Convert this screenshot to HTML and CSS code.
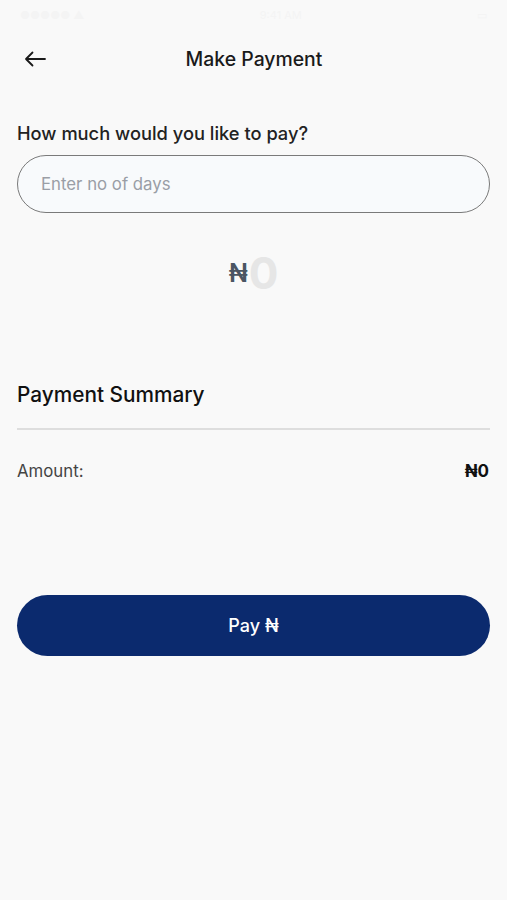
FILE: index.html
```html
<!DOCTYPE html>
<html>
<head>
	<meta charset="utf-8">
	<title>Make Payment</title>
	<link rel="stylesheet" href="styles.css">
</head>
<body>
	<div class="statusbar">
		<span class="sb-left">●●●●● ▲</span>
		<span class="sb-mid">9:41 AM</span>
		<span class="sb-right">▭</span>
	</div>
	<div class="header">
		<button class="back" aria-label="Back">
			<svg width="22" height="16" viewBox="0 0 22 16">
				<path d="M21 8H2M8.5 1.5L2 8l6.5 6.5" fill="none" stroke="#1a1a1a" stroke-width="1.8" stroke-linecap="round" stroke-linejoin="round"/>
			</svg>
		</button>
		<div class="title">Make Payment</div>
	</div>

	<div class="content">
		<label class="question" for="days">How much would you like to pay?</label>
		<input class="days" id="days" type="text" placeholder="Enter no of days">

		<div class="total">
			<span class="naira">₦</span><span class="zero">0</span>
		</div>

		<div class="summary">
			<div class="summary-title">Payment Summary</div>
			<div class="row">
				<span class="row-label">Amount:</span>
				<span class="row-value">₦0</span>
			</div>
		</div>

		<button class="pay">Pay ₦</button>
	</div>
</body>
</html>
```

FILE: styles.css
```css
body{margin:0;background-color:#f9f9f9;font-family:Inter,"Noto Sans",sans-serif;color:#1a1a1a;}

.statusbar{height:30px;display:flex;justify-content:space-between;align-items:center;padding:0 20px;color:#f4f4f4;font-size:11px;}

.header{display:flex;align-items:center;height:58px;padding:0 17px 0 24px;}
.back{background:none;border:none;padding:0;width:22px;height:22px;display:flex;align-items:center;cursor:pointer;}
.title{flex:1;text-align:center;font-size:19.4px;font-weight:500;margin-right:28px;}

.content{padding:0 17px;display:flex;flex-direction:column;}

.question{font-size:18.3px;font-weight:500;color:#222;margin-top:32px;line-height:26px;}

.days{margin-top:9px;height:58px;box-sizing:border-box;border:1.5px solid #7a7a7a;border-radius:29px;background:#f8fafc;padding:0 23px;font-family:inherit;font-size:16.8px;color:#222;outline:none;}
.days::placeholder{color:#9a9ea6;}

.total{text-align:center;margin-top:32px;height:56px;display:flex;justify-content:center;align-items:center;}
.naira{font-size:25px;font-weight:600;color:#4b5563;}
.zero{font-size:44px;font-weight:700;color:#e6e6e6;margin-left:1px;}

.summary{margin-top:81px;}
.summary-title{font-size:20.8px;font-weight:500;color:#111;line-height:25px;padding-bottom:21px;border-bottom:2px solid #dedede;}
.row{display:flex;justify-content:space-between;align-items:center;margin-top:31px;line-height:20px;}
.row-label{font-size:16.8px;color:#444;}
.row-value{font-size:17px;font-weight:700;color:#111;margin-right:1px;}

.pay{margin-top:114px;height:61px;border:none;border-radius:31px;background:#0b2a6e;color:#fff;font-family:inherit;font-size:18px;font-weight:500;cursor:pointer;}
```
